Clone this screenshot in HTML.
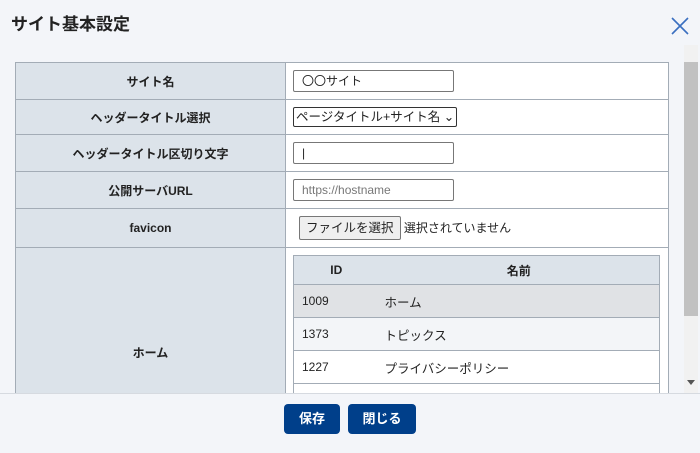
<!DOCTYPE html>
<html><head><meta charset="utf-8"><style>
*{box-sizing:border-box;margin:0;padding:0}
body{width:700px;height:453px;overflow:hidden;background:#f3f5f9;font-family:"Liberation Sans","Noto Sans CJK JP",sans-serif;color:#222;position:relative}
.title{position:absolute;left:11px;top:10px;font-size:17px;font-weight:bold;color:#222}
.close{position:absolute;left:671px;top:17px}
.scroll{position:absolute;left:0;top:45px;width:700px;height:348px;overflow:hidden}
.main{position:absolute;left:15px;top:17px;width:654px;border-collapse:collapse;font-size:12px}
.main td{border:1px solid #a3acb6;height:37px}
.main td.l{background:#dce3ea;width:270px;text-align:center;font-weight:bold;font-size:12px}
.main td.r{background:#fff;padding-left:7px}
.inp{width:161px;height:22px;border:1px solid #777;border-radius:2px;font-size:12px;padding-left:8px;line-height:20px;background:#fff}
.sel{display:inline-block;height:20px;border:1px solid #333;border-radius:2px;font-size:12.5px;padding:0 2px;line-height:18px}
.btnf{display:inline-block;border:1px solid #777;background:#efefef;border-radius:2px;height:24px;line-height:22px;padding:0 6px;font-size:12.5px;margin-left:6px}
.sb{position:absolute;left:684px;top:45px;width:14px;height:348px;background:#f1f1f1}
.thumb{position:absolute;left:684px;top:62px;width:14px;height:254px;background:#c1c1c1}
.inner{position:absolute;left:293px;top:210px;width:367px;border-collapse:collapse;font-size:12.5px}
.inner tr{border:1px solid #a3acb6}
.inner td,.inner th{height:33px;border:none}
.inner th{background:#dce3ea;height:29px;font-weight:bold;font-size:12px}
.inner td+td{padding-left:6px}
.footer{position:absolute;left:0;top:393px;width:700px;height:60px;border-top:1px solid #d6dae0;background:#f3f5f9}
.b{position:absolute;top:10px;height:30px;background:#003f8a;color:#fff;border-radius:4px;text-align:center;line-height:30px;font-size:13px;font-weight:bold}
</style></head><body>
<div class="title">サイト基本設定</div>
<svg class="close" width="18" height="18" viewBox="0 0 18 18"><path d="M1 1L17 17M17 1L1 17" stroke="#3a6fc0" stroke-width="1.6"/></svg>
<div class="scroll">
<table class="main">
<tr><td class="l">サイト名</td><td class="r"><div class="inp">〇〇サイト</div></td></tr>
<tr><td class="l" style="height:35px">ヘッダータイトル選択</td><td class="r" style="height:35px"><span class="sel">ページタイトル+サイト名 ⌄</span></td></tr>
<tr><td class="l">ヘッダータイトル区切り文字</td><td class="r"><div class="inp">|</div></td></tr>
<tr><td class="l">公開サーバURL</td><td class="r"><div class="inp" style="color:#777">https://hostname</div></td></tr>
<tr><td class="l" style="height:39px">favicon</td><td class="r"><span class="btnf">ファイルを選択</span> 選択されていません</td></tr>
<tr><td class="l" style="height:210px">ホーム</td><td class="r"></td></tr>
</table>
<table class="inner">
<tr><th style="width:85px">ID</th><th>名前</th></tr>
<tr style="background:#e0e2e5"><td style="padding-left:8px;font-size:12px">1009</td><td>ホーム</td></tr>
<tr style="background:#f3f5f8"><td style="padding-left:8px;font-size:12px">1373</td><td>トピックス</td></tr>
<tr style="background:#fff"><td style="padding-left:8px;font-size:12px">1227</td><td>プライバシーポリシー</td></tr>
<tr style="background:#fff"><td></td><td></td></tr>
</table>
</div>
<div class="sb"></div><div class="thumb"></div>
<div style="position:absolute;left:687px;top:380px;width:0;height:0;border-left:4px solid transparent;border-right:4px solid transparent;border-top:5px solid #555"></div>
<div class="footer">
<div class="b" style="left:284px;width:56px">保存</div>
<div class="b" style="left:348px;width:68px">閉じる</div>
</div>
</body></html>
